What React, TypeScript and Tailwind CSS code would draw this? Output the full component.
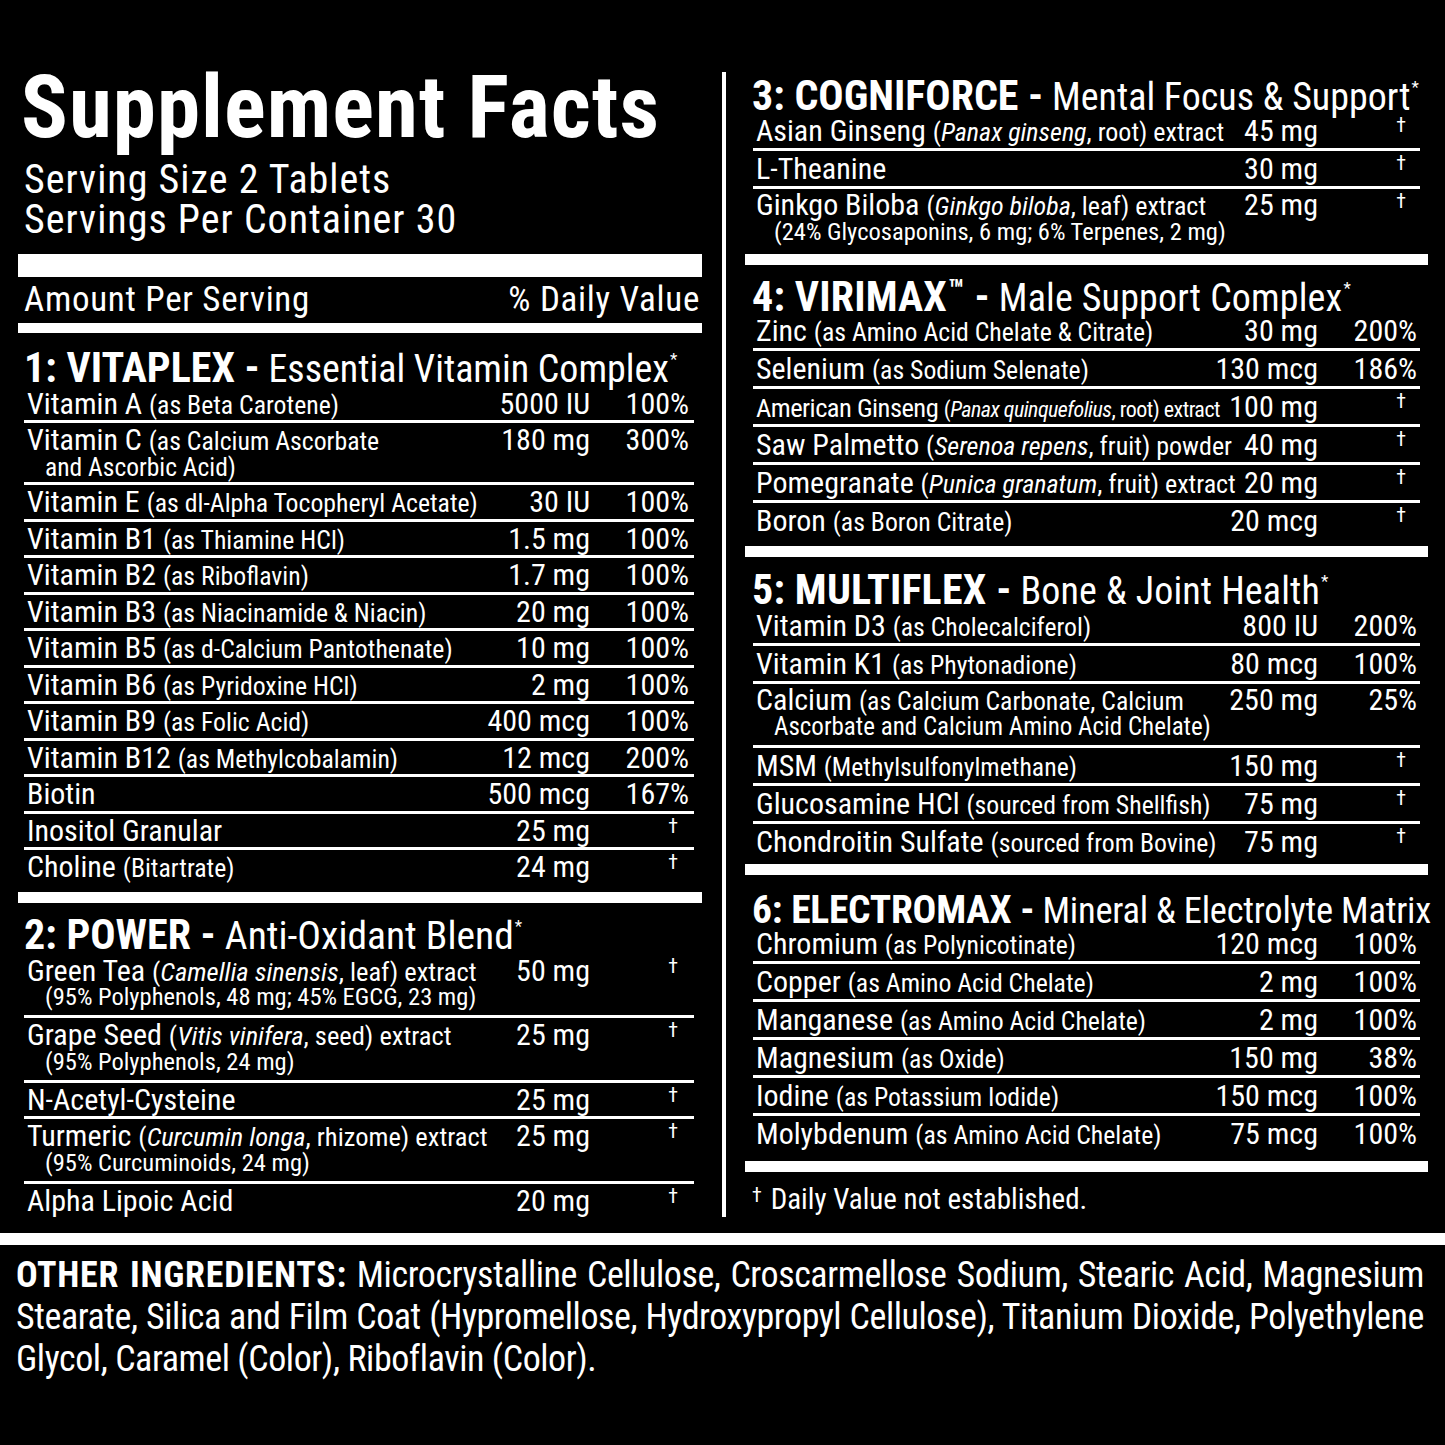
import type { ReactNode } from 'react';

type Item = {
  name: ReactNode;
  sub?: ReactNode;
  subSize?: string;
  amount: string;
  dv: string;
  pb?: string;
};

// parenthetical part of a line
const S = ({ children }: { children: ReactNode }) => (
  <span className="text-[25.75px] leading-none">{children}</span>
);
// botanical descriptions run a touch larger
const BL = ({ children }: { children: ReactNode }) => (
  <span className="text-[26.5px] leading-none">{children}</span>
);
const BR = ({ children }: { children: ReactNode }) => (
  <span className="text-[26px] leading-none">{children}</span>
);

const Dagger = () => (
  <span className="inline-block align-top text-[20px] leading-[20px] mr-[11px] mt-[2px]">†</span>
);

const vitaplex: Item[] = [
  { name: <>Vitamin A <S>(as Beta Carotene)</S></>, amount: '5000 IU', dv: '100%' },
  {
    name: <>Vitamin C <S>(as Calcium Ascorbate</S></>,
    sub: 'and Ascorbic Acid)',
    subSize: 'text-[25.5px]',
    amount: '180 mg',
    dv: '300%',
    pb: 'pb-[5.5px]',
  },
  { name: <>Vitamin E <S>(as dl-Alpha Tocopheryl Acetate)</S></>, amount: '30 IU', dv: '100%' },
  { name: <>Vitamin B1 <S>(as Thiamine HCl)</S></>, amount: '1.5 mg', dv: '100%' },
  { name: <>Vitamin B2 <S>(as Riboflavin)</S></>, amount: '1.7 mg', dv: '100%' },
  { name: <>Vitamin B3 <S>(as Niacinamide &amp; Niacin)</S></>, amount: '20 mg', dv: '100%' },
  { name: <>Vitamin B5 <S>(as d-Calcium Pantothenate)</S></>, amount: '10 mg', dv: '100%' },
  { name: <>Vitamin B6 <S>(as Pyridoxine HCl)</S></>, amount: '2 mg', dv: '100%' },
  { name: <>Vitamin B9 <S>(as Folic Acid)</S></>, amount: '400 mcg', dv: '100%' },
  { name: <>Vitamin B12 <S>(as Methylcobalamin)</S></>, amount: '12 mcg', dv: '200%' },
  { name: 'Biotin', amount: '500 mcg', dv: '167%' },
  { name: 'Inositol Granular', amount: '25 mg', dv: '†' },
  { name: <>Choline <S>(Bitartrate)</S></>, amount: '24 mg', dv: '†' },
];

const power: Item[] = [
  {
    name: <>Green Tea <BL>(<i>Camellia sinensis</i>, leaf) extract</BL></>,
    sub: '(95% Polyphenols, 48 mg; 45% EGCG, 23 mg)',
    amount: '50 mg',
    dv: '†',
    pb: 'pb-[8px]',
  },
  {
    name: <>Grape Seed <BL>(<i>Vitis vinifera</i>, seed) extract</BL></>,
    sub: '(95% Polyphenols, 24 mg)',
    amount: '25 mg',
    dv: '†',
    pb: 'pb-[8px]',
  },
  { name: 'N-Acetyl-Cysteine', amount: '25 mg', dv: '†' },
  {
    name: <>Turmeric <BL>(<i>Curcumin longa</i>, rhizome) extract</BL></>,
    sub: '(95% Curcuminoids, 24 mg)',
    amount: '25 mg',
    dv: '†',
    pb: 'pb-[8px]',
  },
  { name: 'Alpha Lipoic Acid', amount: '20 mg', dv: '†' },
];

const cogniforce: Item[] = [
  { name: <>Asian Ginseng <BR>(<i>Panax ginseng</i>, root) extract</BR></>, amount: '45 mg', dv: '†' },
  { name: 'L-Theanine', amount: '30 mg', dv: '†' },
  {
    name: <>Ginkgo Biloba <BR>(<i>Ginkgo biloba</i>, leaf) extract</BR></>,
    sub: '(24% Glycosaponins, 6 mg; 6% Terpenes, 2 mg)',
    amount: '25 mg',
    dv: '†',
    pb: 'pb-0',
  },
];

const virimax: Item[] = [
  { name: <>Zinc <S>(as Amino Acid Chelate &amp; Citrate)</S></>, amount: '30 mg', dv: '200%' },
  { name: <>Selenium <S>(as Sodium Selenate)</S></>, amount: '130 mcg', dv: '186%' },
  {
    name: (
      <span className="text-[26.5px] tracking-[-0.02em]">
        American Ginseng{' '}
        <span className="text-[22px]">
          (<i>Panax quinquefolius</i>, root) extract
        </span>
      </span>
    ),
    amount: '100 mg',
    dv: '†',
  },
  { name: <>Saw Palmetto <BR>(<i>Serenoa repens</i>, fruit) powder</BR></>, amount: '40 mg', dv: '†' },
  { name: <>Pomegranate <BR>(<i>Punica granatum</i>, fruit) extract</BR></>, amount: '20 mg', dv: '†' },
  { name: <>Boron <S>(as Boron Citrate)</S></>, amount: '20 mcg', dv: '†' },
];

const multiflex: Item[] = [
  { name: <>Vitamin D3 <S>(as Cholecalciferol)</S></>, amount: '800 IU', dv: '200%' },
  { name: <>Vitamin K1 <S>(as Phytonadione)</S></>, amount: '80 mcg', dv: '100%' },
  {
    name: <>Calcium <S>(as Calcium Carbonate, Calcium</S></>,
    sub: 'Ascorbate and Calcium Amino Acid Chelate)',
    subSize: 'text-[25px]',
    amount: '250 mg',
    dv: '25%',
    pb: 'pb-[7px]',
  },
  { name: <>MSM <S>(Methylsulfonylmethane)</S></>, amount: '150 mg', dv: '†' },
  { name: <>Glucosamine HCl <S>(sourced from Shellfish)</S></>, amount: '75 mg', dv: '†' },
  { name: <>Chondroitin Sulfate <S>(sourced from Bovine)</S></>, amount: '75 mg', dv: '†' },
];

const electromax: Item[] = [
  { name: <>Chromium <S>(as Polynicotinate)</S></>, amount: '120 mcg', dv: '100%' },
  { name: <>Copper <S>(as Amino Acid Chelate)</S></>, amount: '2 mg', dv: '100%' },
  { name: <>Manganese <S>(as Amino Acid Chelate)</S></>, amount: '2 mg', dv: '100%' },
  { name: <>Magnesium <S>(as Oxide)</S></>, amount: '150 mg', dv: '38%' },
  { name: <>Iodine <S>(as Potassium Iodide)</S></>, amount: '150 mcg', dv: '100%' },
  { name: <>Molybdenum <S>(as Amino Acid Chelate)</S></>, amount: '75 mcg', dv: '100%' },
];

function Row({ item, right }: { item: Item; right?: boolean }) {
  let line = right ? 'h-[35px] leading-[35px]' : 'h-[33.5px] leading-[33.5px]';
  if (item.sub && right) line = 'h-[32px] leading-[32px]';

  return (
    <div className={item.sub ? item.pb : ''}>
      <div className={`flex ${line} text-[30px]`}>
        <div className="flex-1 whitespace-nowrap pl-[3px]">{item.name}</div>
        <div className="whitespace-nowrap text-right">{item.amount}</div>
        <div className={`text-right ${right ? 'w-[102px] pr-[3px]' : 'w-[104px] pr-[5px]'}`}>
          {item.dv === '†' ? <Dagger /> : item.dv}
        </div>
      </div>
      {item.sub && (
        <div
          className={`${right ? 'h-[22px] leading-[22px]' : 'h-[20px] leading-[20px]'} ${item.subSize ?? 'text-[24.5px]'} pl-[21px] whitespace-nowrap`}
        >
          {item.sub}
        </div>
      )}
    </div>
  );
}

function Section({ items, right }: { items: Item[]; right?: boolean }) {
  return (
    <div className={right ? 'mx-[8px]' : 'ml-[6px] mr-[8px]'}>
      {items.map((item, i) => (
        <div key={i}>
          {i > 0 && <div className="h-[3px] bg-white" />}
          <Row item={item} right={right} />
        </div>
      ))}
    </div>
  );
}

function Heading({
  bold,
  rest,
  tm,
  star = true,
  boldSize = 'text-[42px]',
  restSize = 'text-[38px]',
  className,
}: {
  bold: string;
  rest: string;
  tm?: boolean;
  star?: boolean;
  boldSize?: string;
  restSize?: string;
  className: string;
}) {
  return (
    <div className={`whitespace-nowrap leading-[41px] ${className}`}>
      <span className={`font-bold ${boldSize}`}>
        {bold}
        {tm && <span className="relative -top-[11px] ml-[1px] text-[30px]">™</span>}
        {' -'}
      </span>
      <span className={restSize}> {rest}</span>
      {star && <span className="relative -top-[17px] ml-[1px] text-[17px]">*</span>}
    </div>
  );
}

export default function App() {
  return (
    <div className="w-[1445px] h-[1445px] overflow-hidden bg-black text-white [font-family:'Roboto_Condensed','Roboto',sans-serif] [font-stretch:75%]">
      <div className="flex pt-[62px]">
        {/* left column */}
        <div className="ml-[18px] w-[684px]">
          <div className="mt-[2px] h-[86px] whitespace-nowrap pl-[3px] text-[87px] font-bold leading-[86px] tracking-[0.012em]">
            Supplement Facts
          </div>
          <div className="mt-[10.4px] pl-[6px] text-[40px] leading-[40px] tracking-[0.025em]">
            <div>Serving Size 2 Tablets</div>
            <div>Servings Per Container 30</div>
          </div>
          <div className="mt-[13.6px] h-[23px] bg-white" />
          <div className="flex h-[46px] justify-between pl-[6px] pr-[2px] text-[35px] leading-[46px] tracking-[0.02em]">
            <span>Amount Per Serving</span>
            <span>% Daily Value</span>
          </div>
          <div className="h-[10px] bg-white" />

          <Heading bold="1: VITAPLEX" rest="Essential Vitamin Complex" className="mt-[14px] h-[40px] pl-[6px]" />
          <Section items={vitaplex} />
          <div className="mt-[8px] h-[11px] bg-white" />

          <Heading
            bold="2: POWER"
            rest="Anti-Oxidant Blend"
            restSize="text-[39.5px]"
            className="mt-[11px] h-[40px] pl-[6px]"
          />
          <Section items={power} />
        </div>

        <div className="ml-[20px] mt-[10px] w-[4px] bg-white" />

        {/* right column */}
        <div className="ml-[19px] w-[683px]">
          <Heading bold="3: COGNIFORCE" rest="Mental Focus & Support" className="mt-[13px] h-[38px] pl-[7px]" />
          <Section right items={cogniforce} />
          <div className="mt-[11px] h-[11px] bg-white" />

          <Heading
            bold="4: VIRIMAX"
            tm
            rest="Male Support Complex"
            className="mt-[10.5px] h-[37px] pl-[7px] tracking-[0.01em]"
          />
          <Section right items={virimax} />
          <div className="mt-[8.5px] h-[11px] bg-white" />

          <Heading
            bold="5: MULTIFLEX"
            rest="Bone & Joint Health"
            className="mt-[11.5px] h-[39px] pl-[7px] tracking-[0.01em]"
          />
          <Section right items={multiflex} />
          <div className="mt-[5.5px] h-[11px] bg-white" />

          <Heading
            bold="6: ELECTROMAX"
            rest="Mineral & Electrolyte Matrix"
            star={false}
            boldSize="text-[39.5px]"
            restSize="text-[36.5px]"
            className="mt-[13.5px] h-[37px] pl-[7px] tracking-[-0.015em]"
          />
          <Section right items={electromax} />
          <div className="mt-[10.5px] h-[11px] bg-white" />

          <div className="mt-[12px] h-[30px] whitespace-nowrap pl-[7px] text-[29px] leading-[30px]">
            <span className="mr-[9px] mt-[1px] inline-block align-top text-[20px] leading-[20px]">†</span>
            Daily Value not established.
          </div>
        </div>
      </div>

      <div className="mt-[16px] h-[12px] bg-white" />

      <div className="mt-[9px] pl-[16px] pr-[21px] text-[36px] leading-[42px] tracking-[-0.012em]">
        <div className="whitespace-nowrap text-justify [text-align-last:justify]">
          <span className="font-bold tracking-[0.02em]">OTHER INGREDIENTS:</span> Microcrystalline Cellulose,
          Croscarmellose Sodium, Stearic Acid, Magnesium
        </div>
        <div className="whitespace-nowrap text-justify [text-align-last:justify]">
          Stearate, Silica and Film Coat (Hypromellose, Hydroxypropyl Cellulose), Titanium Dioxide, Polyethylene
        </div>
        <div className="whitespace-nowrap">Glycol, Caramel (Color), Riboflavin (Color).</div>
      </div>
    </div>
  );
}
